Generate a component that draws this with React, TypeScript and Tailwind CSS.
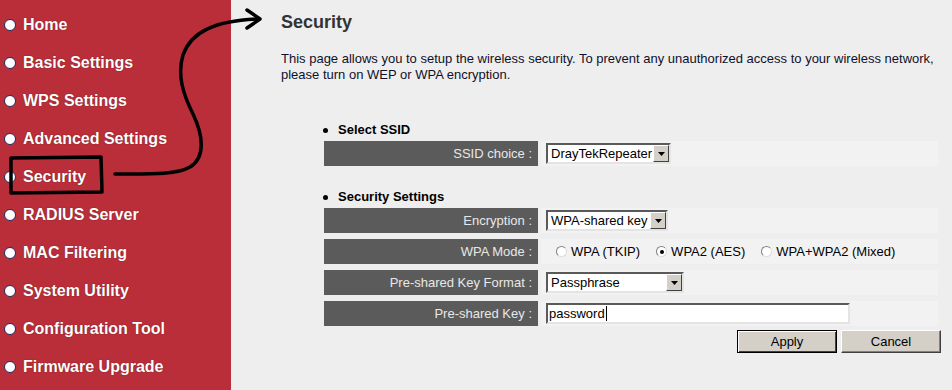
import React from 'react'

const menu = [
  'Home',
  'Basic Settings',
  'WPS Settings',
  'Advanced Settings',
  'Security',
  'RADIUS Server',
  'MAC Filtering',
  'System Utility',
  'Configuration Tool',
  'Firmware Upgrade',
]

const Arrow = () => (
  <span className="flex w-[16px] items-center justify-center border border-t-white border-l-white border-b-[#404040] border-r-[#404040] bg-[#d4d0c8]">
    <svg width="7" height="4" viewBox="0 0 7 4"><path d="M0 0H7L3.5 4Z" fill="#000" /></svg>
  </span>
)

const Select = ({ value, width }: { value: string; width: string }) => (
  <div className={`flex h-[21px] ${width} border-2 border-t-[#5a5a5a] border-l-[#5a5a5a] border-b-[#e4e4e4] border-r-[#e4e4e4] bg-white`}>
    <span className="flex flex-1 items-center pl-[3px] text-[13px] text-black">{value}</span>
    <Arrow />
  </div>
)

const Radio = ({ checked, label }: { checked?: boolean; label: string }) => (
  <span className="flex items-center gap-[4px]">
    <span className="flex h-[11px] w-[11px] items-center justify-center rounded-full border border-t-[#808080] border-l-[#808080] border-b-[#dcdcdc] border-r-[#dcdcdc] bg-white">
      {checked && <span className="h-[4px] w-[4px] rounded-full bg-black" />}
    </span>
    <span className="text-[13px] text-black">{label}</span>
  </span>
)

const Row = ({ label, children, mt }: { label: string; children: React.ReactNode; mt: string }) => (
  <div className={`flex h-[25px] gap-[3px] ${mt}`}>
    <div className="flex w-[214px] items-center justify-end bg-[#5b5b5b] pr-[6px] text-[13px] text-[#e8e8e8]">{label}</div>
    <div className="flex w-[397px] items-center bg-[#f2f2f2] pl-[5px]">{children}</div>
  </div>
)

const Heading = ({ text, mt }: { text: string; mt: string }) => (
  <div className={`flex h-[18px] items-center ${mt}`}>
    <span className="ml-[-1px] h-[5px] w-[5px] rounded-full bg-black" />
    <span className="ml-[10px] text-[13px] font-bold text-black">{text}</span>
  </div>
)

export default function App() {
  return (
    <div className="relative flex h-[390px] w-[952px] overflow-hidden bg-[#eeeeee] font-['Liberation_Sans',Arial,sans-serif]">
      <div className="flex w-[231px] shrink-0 flex-col bg-[#b92e38] pt-[6px]">
        {menu.map((m) => (
          <div key={m} className="flex h-[38px] items-center">
            <span className="ml-[4px] h-[12px] w-[12px] rounded-full border-[1.5px] border-[#1f2a63] bg-white" />
            <span className="ml-[7px] text-[16px] font-bold text-white [text-shadow:0_0_1px_#5a1016]">{m}</span>
          </div>
        ))}
      </div>

      <div className="flex flex-col pl-[50px]">
        <div className="flex h-[44px] items-center text-[18px] font-bold text-[#333333]">Security</div>
        <p className="mt-[7px] w-[668px] text-[13px] leading-[16px] text-[#10102a]">
          This page allows you to setup the wireless security. To prevent any unauthorized access to your wireless network, please turn on WEP or WPA encryption.
        </p>

        <div className="ml-[43px] flex w-[617px] flex-col">
          <Heading text="Select SSID" mt="mt-[38px]" />
          <Row label="SSID choice :" mt="mt-[2px]">
            <Select value="DrayTekRepeater" width="w-[125px]" />
          </Row>

          <Heading text="Security Settings" mt="mt-[22px]" />
          <Row label="Encryption :" mt="mt-[2px]">
            <Select value="WPA-shared key" width="w-[122px]" />
          </Row>
          <Row label="WPA Mode :" mt="mt-[6px]">
            <div className="ml-[10px] flex items-center gap-[16px]">
              <Radio label="WPA (TKIP)" />
              <Radio checked label="WPA2 (AES)" />
              <Radio label="WPA+WPA2 (Mixed)" />
            </div>
          </Row>
          <Row label="Pre-shared Key Format :" mt="mt-[6px]">
            <Select value="Passphrase" width="w-[138px]" />
          </Row>
          <Row label="Pre-shared Key :" mt="mt-[6px]">
            <div className="flex h-[21px] w-[304px] items-center border-2 border-t-[#5a5a5a] border-l-[#5a5a5a] border-b-[#e4e4e4] border-r-[#e4e4e4] bg-white pl-[1px] text-[13px] text-black">
              password<span className="ml-[1px] h-[15px] w-[1px] bg-black" />
            </div>
          </Row>

          <div className="mt-[4px] flex justify-end gap-[4px]">
            <button className="h-[23px] w-[100px] border border-black bg-[#d4d0c8] text-[13px] text-black shadow-[inset_1px_1px_0_#fff,inset_-1px_-1px_0_#404040]">
              Apply
            </button>
            <button className="h-[23px] w-[100px] border border-t-white border-l-white border-b-[#404040] border-r-[#404040] bg-[#d4d0c8] text-[13px] text-black shadow-[inset_-1px_-1px_0_#808080]">
              Cancel
            </button>
          </div>
        </div>
      </div>

      <svg className="pointer-events-none absolute inset-0" width="952" height="390" viewBox="0 0 952 390" fill="none">
        <path d="M11 158 L101 157 L102 192 L11 193 Z" stroke="#000" strokeWidth="3.5" strokeLinejoin="round" />
        <path
          d="M115 174 C150 174 176 175 190 167 C206 157 203 135 193 114 C183 94 177 75 183 55 C191 32 214 21 258 19"
          stroke="#000"
          strokeWidth="3.5"
          strokeLinecap="round"
        />
        <path d="M247 10 L260 19 L247 28" stroke="#000" strokeWidth="3.5" strokeLinecap="round" strokeLinejoin="round" />
      </svg>
    </div>
  )
}
